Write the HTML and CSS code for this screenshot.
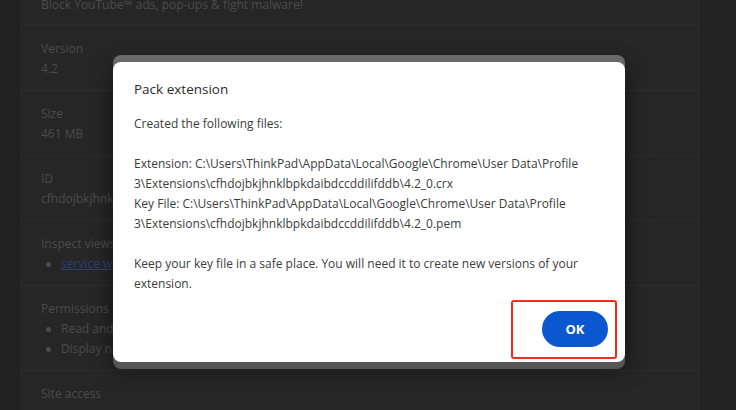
FILE: index.html
```html
<!DOCTYPE html>
<html lang="en">

<head>
    <meta charset="UTF-8">
    <meta name="viewport" content="width=device-width, initial-scale=1.0">
    <title>Extension details</title>
    <link rel="stylesheet" href="styles.css">
</head>

<body>
    <div class="page">
        <div class="card">
            <div class="section first">
                <p>Block YouTube™ ads, pop-ups &amp; fight malware!</p>
            </div>
            <div class="section">
                <p>Version</p>
                <p>4.2</p>
            </div>
            <div class="section">
                <p>Size</p>
                <p>461 MB</p>
            </div>
            <div class="section">
                <p>ID</p>
                <p>cfhdojbkjhnklbpkdaibdccddilifddb</p>
            </div>
            <div class="section">
                <p>Inspect views</p>
                <ul>
                    <li><a href="#">service worker</a></li>
                </ul>
            </div>
            <div class="section">
                <p>Permissions</p>
                <ul>
                    <li>Read and change all your data on all websites</li>
                    <li>Display notifications</li>
                </ul>
            </div>
            <div class="section">
                <p>Site access</p>
            </div>
        </div>
        <div class="side"></div>
    </div>

    <div class="overlay">
        <div class="dialog">
            <h2 class="title">Pack extension</h2>
            <div class="body">
                <p>Created the following files:</p>
                <p>Extension: C:\Users\ThinkPad\AppData\Local\Google\Chrome\User Data\Profile<br>3\Extensions\cfhdojbkjhnklbpkdaibdccddilifddb\4.2_0.crx<br>Key File: C:\Users\ThinkPad\AppData\Local\Google\Chrome\User Data\Profile<br>3\Extensions\cfhdojbkjhnklbpkdaibdccddilifddb\4.2_0.pem</p>
                <p>Keep your key file in a safe place. You will need it to create new versions of your<br>extension.</p>
            </div>
            <div class="actions">
                <button class="ok">OK</button>
                <span class="mark"></span>
            </div>
        </div>
    </div>
</body>

</html>
```

FILE: styles.css
```css
* {
    margin: 0;
    padding: 0;
    box-sizing: border-box;
}
body {
    width: 736px;
    height: 410px;
    overflow: hidden;
    background-color: #212121;
    font-family: "Open Sans", "Noto Sans", sans-serif;
    font-size: 12px;
    line-height: 20px;
    position: relative;
}
.page {
    display: flex;
    height: 100%;
    padding-left: 20px;
}
.card {
    width: 681px;
    background-color: #262626;
    margin-top: -5px;
    color: #4c4c4c;
}
.side {
    flex: 1;
    border-left: 1px solid #1e1e1e;
    background-color: #242424;
}
.section {
    padding: 13px 21px 11px;
    border-bottom: 1px solid #2e2e2e;
}
.section.first {
    padding-top: 0;
    padding-bottom: 10px;
}
.section ul {
    list-style: none;
}
.section li {
    position: relative;
    padding-left: 20px;
}
.section li::before {
    content: "";
    position: absolute;
    left: 5px;
    top: 8px;
    width: 5px;
    height: 5px;
    border-radius: 50%;
    background-color: #4c4c4c;
}
.section a {
    color: #2c4270;
}

.overlay {
    position: absolute;
    inset: 0;
    display: flex;
    justify-content: center;
    align-items: flex-start;
    padding-top: 62px;
    padding-left: 2px;
}
.dialog {
    width: 512px;
    height: 300px;
    background-color: #fff;
    border-radius: 8px;
    box-shadow: 0 -7px 0 #6a6a6a, 0 7px 0 #565656, 0 6px 20px rgba(0, 0, 0, 0.55);
    padding: 16px 17px 15px 21px;
    display: flex;
    flex-direction: column;
}
.title {
    font-size: 13.5px;
    font-weight: 400;
    line-height: 22px;
    color: #2b2b2b;
}
.body {
    margin-top: 14px;
    color: #3c3c3c;
    display: flex;
    flex-direction: column;
    gap: 20px;
}
.actions {
    margin-top: auto;
    display: flex;
    justify-content: flex-end;
    position: relative;
}
.ok {
    width: 66px;
    height: 36px;
    border: none;
    border-radius: 18px;
    background-color: #0b57d0;
    color: #fff;
    font-family: "Open Sans", sans-serif;
    font-size: 13px;
    font-weight: 700;
}
.mark {
    position: absolute;
    right: -9px;
    top: -11px;
    width: 106px;
    height: 59px;
    border: 2px solid #f5291c;
    border-radius: 3px;
}
```
